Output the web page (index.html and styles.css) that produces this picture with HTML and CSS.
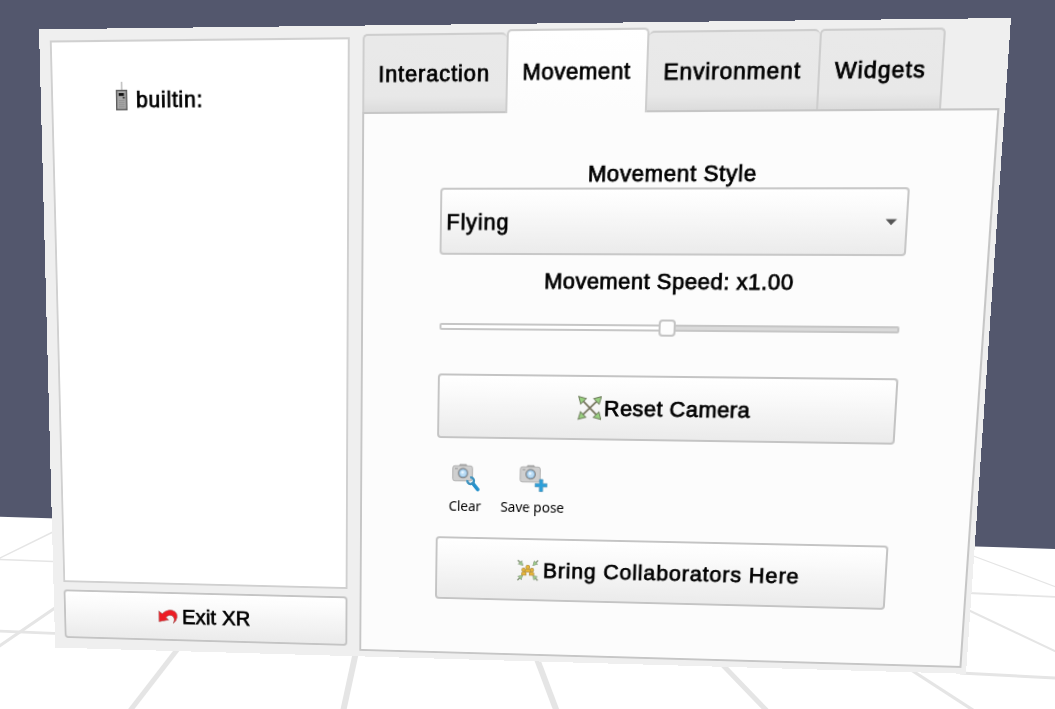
FILE: index.html
```html
<!DOCTYPE html>
<html lang="en">
<head>
<meta charset="utf-8">
<title>XR Interface</title>
<link rel="stylesheet" href="styles.css">
</head>
<body>
<main class="scene">
  <svg class="floor" viewBox="0 0 1055 709" aria-hidden="true">
    <path fill="#fff" d="M0 516.8 1055 549V709H0Z"/>
    <g stroke="#e5e5e5" fill="none">
      <path stroke-width="1.5" d="M-2 559 60 528.5M-2 559.4 60 561.8"/>
      <path stroke-width="2.6" d="M-2 631 60 633.6"/>
      <path stroke-width="3" d="M-2 647 60 604.5"/>
      <path stroke-width="5" d="M180 646 129 712"/>
      <path stroke-width="6" d="M357.500 645 343 712"/>
      <path stroke-width="6" d="M534 651 557 712"/>
      <path stroke-width="5" d="M716 658 768 712"/>
      <path stroke-width="3.200" d="M905 666 976 712"/>
      <path stroke-width="1.200" d="M968 554 1057 587.300"/>
      <path stroke-width="1.800" d="M968 593 1057 597"/>
      <path stroke-width="2" d="M965 608.500 1057 652"/>
      <path stroke-width="3" d="M960 673 1057 678"/>
    </g>
  </svg>

  <section class="panel">
    <div class="side">
      <div class="devices">
        <div class="device">
          <svg class="icon-device" viewBox="0 0 12 28">
            <path d="M6.300 0V8" stroke="#aaa" stroke-width="1.200"/>
            <rect x=".7" y="8.500" width="10.600" height="18.800" fill="#a8a8a8" stroke="#5c5c5c" stroke-width="1.400"/>
            <rect x="3" y="11" width="5.500" height="2.800" fill="#111"/>
            <rect x="7.300" y="14.800" width="1.900" height="1.600" fill="#222"/>
            <path d="M3 18.500H9M3 20.500H9M3 22.500H9M3 24.500H9" stroke="#8c8c8c" stroke-width=".8"/>
          </svg>
          <span class="text builtin">builtin:</span>
        </div>
      </div>
      <button class="button exit">
        <svg class="icon-exit" viewBox="0 0 22 16">
          <path d="M.8 2 4.500 4.800C8.500.3 14.500-.5 18.500 2 22.700 5 21.500 11.500 16.600 15.200 18.300 11.500 18 8.200 15.400 6.800 12.900 5.600 10.400 6.800 8.600 8.900L11.400 11.600.8 13.800Z" fill="#ed1c24" stroke="#a66" stroke-width=".7"/>
        </svg>
        <span class="text">Exit XR</span>
      </button>
    </div>

    <div class="content">
      <nav class="tabs">
        <div class="tab interaction"><span class="text">Interaction</span></div>
        <div class="tab movement active"><span class="text">Movement</span></div>
        <div class="tab environment"><span class="text">Environment</span></div>
        <div class="tab widgets"><span class="text">Widgets</span></div>
      </nav>
      <div class="page">
        <div class="text label style-label">Movement Style</div>
        <div class="combo">
          <span class="text">Flying</span>
          <svg class="arrow" viewBox="0 0 12 7"><path d="M.5.500H11.500L6 6.300Z" fill="#555"/></svg>
        </div>
        <div class="text label speed-label">Movement Speed: x1.00</div>
        <div class="slider"><div class="track"></div><div class="handle"></div></div>
        <button class="button reset">
          <svg class="icon-reset" viewBox="0 0 24 24">
            <path d="M4 4 20 20M20 4 4 20" stroke="#77765f" stroke-width="1.800"/>
            <g fill="#98d07f" stroke="#71805f" stroke-width="1">
              <path d="M.7.700 8.200 2.800 2.800 8.200Z"/>
              <path d="M23.300.700 21.200 8.200 15.800 2.800Z"/>
              <path d="M23.300 23.300 15.800 21.200 21.200 15.800Z"/>
              <path d="M.7 23.300 2.800 15.800 8.200 21.200Z"/>
            </g>
          </svg>
          <span class="text">Reset Camera</span>
        </button>
        <div class="tools">
          <div class="tool">
            <svg class="icon-tool" viewBox="0 0 29 29">
              <path d="M8 2.500V1H15V2.500" fill="#aaa" stroke="#999"/>
              <rect x=".8" y="2.300" width="20.500" height="15.500" rx="2.200" fill="#cfcfcf" stroke="#b0b0b0"/>
              <path d="M3 5.200H6" stroke="#999" stroke-width="1"/>
              <circle cx="11.500" cy="9.800" r="5.500" fill="#8c8c8c"/>
              <circle cx="11.500" cy="9.800" r="4" fill="#b9dcf5" stroke="#7da6c8" stroke-width=".8"/>
              <circle cx="11" cy="9" r="1.500" fill="#e8f5ff"/>
              <path d="M22 20.500 27 26.500" stroke="#2591cc" stroke-width="3.600" stroke-linecap="round"/>
              <path d="M16.200 17A3.400 3.400 0 1 0 19 14.200" fill="none" stroke="#3a91bf" stroke-width="2.400"/>
            </svg>
            <span class="caption">Clear</span>
          </div>
          <div class="tool">
            <svg class="icon-tool" viewBox="0 0 29 29">
              <path d="M8 2.500V1H15V2.500" fill="#aaa" stroke="#999"/>
              <rect x=".8" y="2.300" width="20.500" height="15.500" rx="2.200" fill="#cfcfcf" stroke="#b0b0b0"/>
              <path d="M3 5.200H6" stroke="#999" stroke-width="1"/>
              <circle cx="11.500" cy="9.800" r="5.500" fill="#8c8c8c"/>
              <circle cx="11.500" cy="9.800" r="4" fill="#b9dcf5" stroke="#7da6c8" stroke-width=".8"/>
              <circle cx="11" cy="9" r="1.500" fill="#e8f5ff"/>
              <path d="M20.800 15H24.200V19.300H28.700V22.700H24.200V27.500H20.800V22.700H16.300V19.300H20.800Z" fill="#2b9fda" stroke="#5594b5" stroke-width=".7"/>
            </svg>
            <span class="caption">Save pose</span>
          </div>
        </div>
        <button class="button bring">
          <svg class="icon-bring" viewBox="0 0 24 24">
            <g stroke="#7e8f72" stroke-width="1.500"><path d="M1.300 1.300 5 5M22.700 1.300 19 5M1.300 22.700 5 19M22.700 22.700 19 19"/></g>
            <g fill="#9ccb88" stroke="#8a9a80" stroke-width=".6">
              <path d="M6.800 6.800 1.800 5.400 5.400 1.800Z"/><path d="M17.200 6.800 18.600 1.800 22.200 5.400Z"/>
              <path d="M6.800 17.200 5.400 22.200 1.800 18.600Z"/><path d="M17.200 17.200 22.200 18.600 18.600 22.200Z"/>
            </g>
            <g fill="#e8b634" stroke="#b3934a" stroke-width=".8">
              <path d="M9 14V11.500Q12 9 15 11.500V14Z"/>
              <path d="M5.500 17.300V14.800Q7.800 12.500 10.200 14.800V17.300ZM13.800 17.300V14.800Q16.200 12.500 18.500 14.800V17.300Z"/>
              <circle cx="7.600" cy="11.600" r="1.900"/><circle cx="16.400" cy="11.600" r="1.900"/><circle cx="12" cy="8.500" r="2"/>
            </g>
          </svg>
          <span class="text">Bring Collaborators Here</span>
        </button>
      </div>
    </div>
  </section>
</main>
</body>
</html>
```

FILE: styles.css
```css
* { box-sizing: border-box; }

body {
  margin: 0;
  overflow: hidden;
}

svg { display: block; flex: none; }

.scene {
  position: relative;
  width: 1055px;
  height: 709px;
  overflow: hidden;
  background: #53576d;
  font-family: "Liberation Sans", Arial, sans-serif;
  color: #000;
}

.floor {
  position: absolute;
  inset: 0;
  width: 1055px;
  height: 709px;
}

/* The flat 960x640 panel is projected into the 3D scene. */
.panel {
  position: relative;
  display: grid;
  grid-template-columns: 309px 621.500px;
  column-gap: 13px;
  width: 960px;
  height: 640px;
  padding-left: 11px;
  background: #efefef;
  transform-origin: 0 0;
  transform: matrix3d(0.949577, -0.0128911, 0, -0.0000622385,
                      0.0308531, 1.031098, 0, 0.0001003781,
                      0, 0, 1, 0,
                      39, 29.3, 0, 1);
}

.text {
  font-size: 22px;
  line-height: 26px;
  white-space: nowrap;
  -webkit-text-stroke: 0.75px #000;
}

.side {
  display: flex;
  flex-direction: column;
  gap: 8px;
  padding: 11px 0;
}

.devices {
  flex: 1;
  padding: 39px 0 0 66px;
  background: #fff;
  border: 2px solid #d0d0d0;
}

.device { display: flex; gap: 9px; }
.icon-device { width: 12px; height: 28px; }
.builtin { margin-top: 5px; letter-spacing: 0.8px; }

.button {
  display: flex;
  align-items: center;
  justify-content: center;
  width: 100%;
  padding: 1px 0 0;
  font-family: inherit;
  color: inherit;
  background: linear-gradient(#fff, #fbfbfb 25%, #ebebeb);
  border: 2px solid #c4c4c4;
  border-radius: 4px;
}

.exit { height: 53px; gap: 4px; letter-spacing: 0.2px; }
.icon-exit { width: 21.500px; height: 15.600px; }

.content { padding-top: 5px; }

.tabs {
  display: flex;
  align-items: flex-end;
  height: 78px;
}

.tab {
  display: flex;
  align-items: center;
  justify-content: center;
  height: 75px;
  padding-top: 1px;
  background: linear-gradient(#e9e9e9, #e8e8e8 80%, #dcdcdc);
  border: 2px solid #cecece;
  border-bottom: 0;
  border-radius: 5px 5px 0 0;
}

.interaction { width: 144px; letter-spacing: 0.85px; padding-right: 2px; border-right: 0; }
.movement { width: 140px; letter-spacing: 0.5px; }
.environment { width: 164px; padding-right: 1px; letter-spacing: 0.85px; border-left: 0; border-right: 0; }
.widgets { width: 118.500px; letter-spacing: 1px; }

.tab.active {
  position: relative;
  height: 80px;
  margin-bottom: -2px;
  padding: 0 1px 0 0;
  background: linear-gradient(#fff, #fcfcfc);
}

.page {
  display: flex;
  flex-direction: column;
  height: 551px;
  padding: 46px 77.700px 0 77.600px;
  background: #fcfcfc;
  border: 2px solid #c6c6c6;
}

.label { text-align: center; }
.style-label { letter-spacing: 0.6px; }
.speed-label { margin-top: 13px; letter-spacing: 0.45px; }

.combo {
  display: flex;
  align-items: center;
  justify-content: space-between;
  height: 66px;
  padding: 1px 8px 0 5px;
  letter-spacing: 0.85px;
  background: linear-gradient(#fff, #fbfbfb 25%, #ebebeb);
  border: 2px solid #c8c8c8;
  border-radius: 4px;
}
.arrow { width: 12px; height: 7px; }

.slider {
  display: grid;
  place-items: center;
  height: 17px;
  margin-top: 24px;
}
.track {
  grid-area: 1 / 1;
  width: 459px;
  height: 7px;
  background: linear-gradient(90deg, #fff 50%, #dadada 50%);
  border: 2px solid #c6c6c6;
  border-radius: 2px;
}
.handle {
  grid-area: 1 / 1;
  z-index: 1;
  width: 17px;
  height: 17px;
  margin-left: 1px;
  background: #fdfdfd;
  border: 2px solid #c4c4c4;
  border-radius: 4px;
}

.reset { height: 66px; margin-top: 39px; gap: 2.5px; letter-spacing: 0.45px; }
.icon-reset { width: 24.500px; height: 24.500px; }

.tools {
  display: flex;
  gap: 20px;
  margin-top: 26px;
  padding-left: 13.3px;
}
.tool {
  display: flex;
  flex-direction: column;
  align-items: center;
  gap: 5px;
}
.icon-tool { width: 29px; height: 29px; margin-left: 2px; }
.caption {
  font: 14px/20px "Noto Sans", "Open Sans", sans-serif;
  white-space: nowrap;
}

.bring { height: 66px; margin-top: 22px; gap: 4px; padding-right: 1.5px; letter-spacing: 0.85px; }
.icon-bring { width: 23.500px; height: 23.500px; }
```
